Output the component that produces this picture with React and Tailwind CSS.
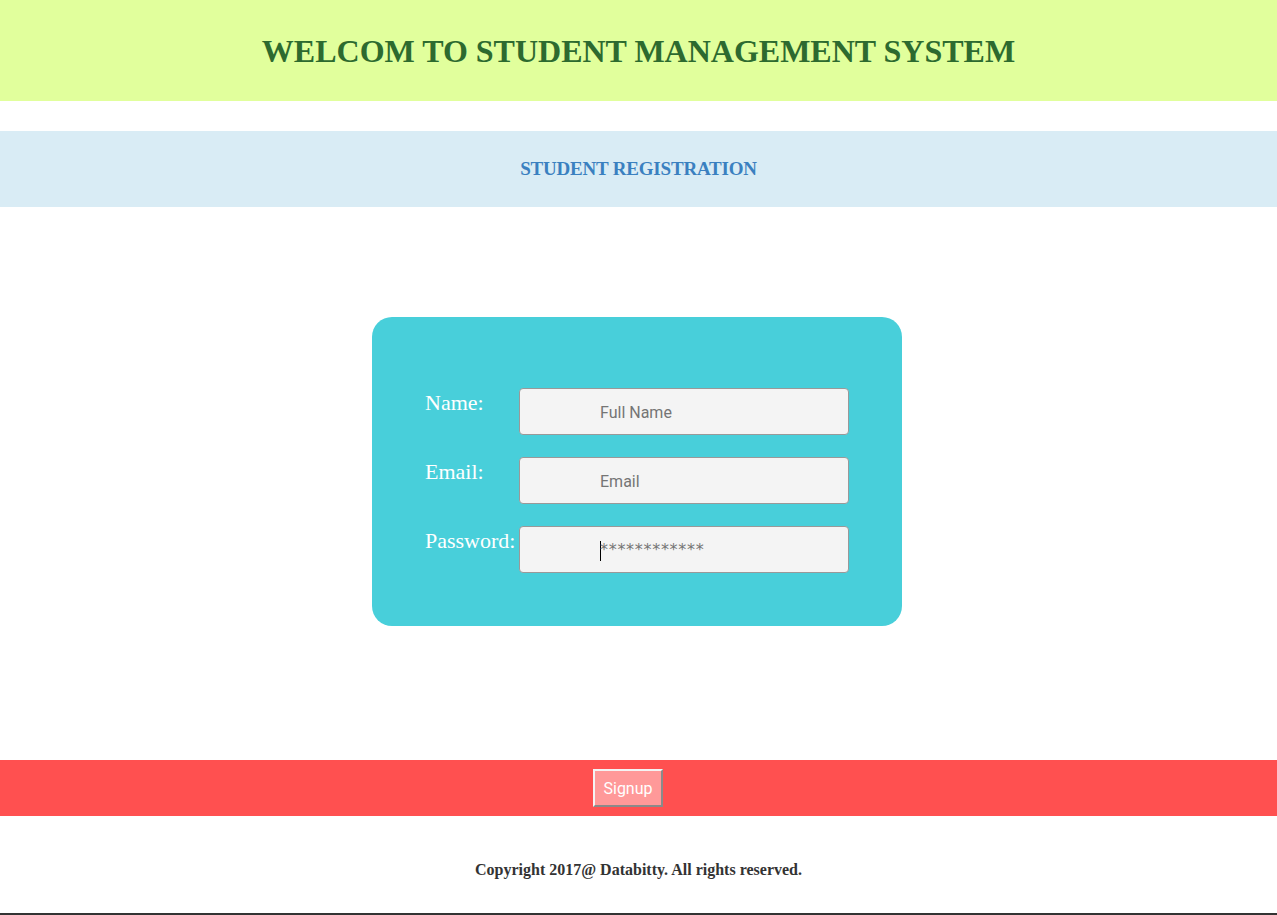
export default function App() {
  const serif = { fontFamily: '"Liberation Serif", "Times New Roman", serif' };
  const rows = [
    { label: "Name:", placeholder: "Full Name" },
    { label: "Email:", placeholder: "Email" },
    { label: "Password:", placeholder: "************", caret: true },
  ];
  return (
    <div className="h-[915px] bg-white flex flex-col overflow-hidden" style={serif}>
      <header className="h-[101px] shrink-0 bg-[#e1ff9c] flex items-center justify-center">
        <h1 className="text-[32px] font-bold text-[#2d6a2f]">
          WELCOM TO STUDENT MANAGEMENT SYSTEM
        </h1>
      </header>
      <div className="mt-[30px] h-[76px] shrink-0 bg-[#d9ecf5] flex items-center justify-center">
        <h2 className="text-[19px] font-bold text-[#3a80c0] tracking-[-0.2px]">STUDENT REGISTRATION</h2>
      </div>
      <div className="flex justify-center mt-[110px] shrink-0">
        <div className="w-[530px] h-[309px] mr-[3px] rounded-[20px] bg-[#48cfda] pl-[53px] pt-[71px]">
          <div className="flex flex-col gap-[22px]">
            {rows.map((r) => (
              <div key={r.label} className="flex items-start">
                <label className="w-[94px] text-[22px] leading-[26px] text-white pt-[2px]">{r.label}</label>
                <div
                  className="w-[330px] h-[47px] rounded-[4px] border border-[#999999] bg-[#f4f4f4] flex items-center pl-[80px] pt-[3px] text-[#757575]"
                  style={{ fontFamily: 'Roboto, Tahoma, sans-serif' }}
                >
                  {r.caret && <span className="w-px h-[20px] bg-black mr-[-1px]" />}
                  <span
                    className={r.caret ? "text-[16px] tracking-[0.7px] -mt-[2px]" : "text-[16px]"}
                    style={r.caret ? { fontFamily: '"DejaVu Sans", sans-serif' } : undefined}
                  >
                    {r.placeholder}
                  </span>
                </div>
              </div>
            ))}
          </div>
        </div>
      </div>
      <div className="mt-[134px] h-[56px] shrink-0 bg-[#ff5050] flex items-center justify-center">
        <button
          className="w-[70px] h-[38px] mr-[21px] pt-[2px] bg-[#ff9999] text-white text-[16px] border-2 border-t-[#f4f4f4] border-l-[#f4f4f4] border-r-[#8a8a8a] border-b-[#8a8a8a]"
          style={{ fontFamily: 'Roboto, Arial, sans-serif' }}
        >
          Signup
        </button>
      </div>
      <footer className="h-[97px] shrink-0 flex items-center justify-center pt-[11px]">
        <p className="text-center text-[16px] leading-[20px] font-bold text-[#333333]">
          Copyright 2017@ Databitty. All rights reserved.
        </p>
      </footer>
      <div className="h-[2px] shrink-0 bg-[#333333]" />
    </div>
  );
}
